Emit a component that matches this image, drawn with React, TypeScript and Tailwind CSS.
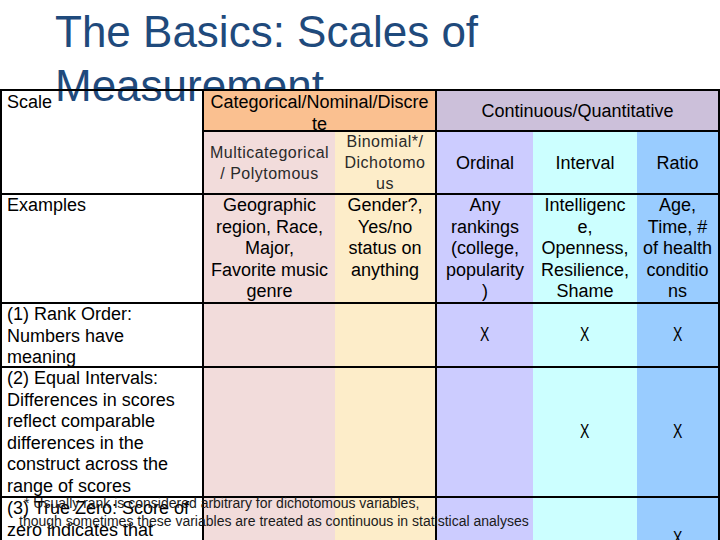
import React from "react";

const X = () => <span className="inline-block scale-x-[0.7] text-[20px]">X</span>;

export default function App() {
  const scaleCell = "border-l-2 border-r-2 border-b-2 border-black pl-[5px] whitespace-nowrap";
  const multi = "bg-[#f2dcdb] border-b-2 border-black";
  const bino = "bg-[#fdedc9] border-b-2 border-r-2 border-black";
  const ord = "bg-[#ccccff] border-b-2 border-black";
  const intv = "bg-[#ccffff] border-b-2 border-black";
  const ratio = "bg-[#99ccff] border-b-2 border-r-2 border-black";
  const center = "flex items-center justify-center text-center";
  const top = "text-center whitespace-nowrap";
  return (
    <div className="relative w-[720px] h-[540px] overflow-hidden bg-white font-['Liberation_Sans',Arial,sans-serif] text-black">
      <div className="h-[89px] pl-[55px] pt-[5px] text-[44px] leading-[54px] text-[#1f4a7c] whitespace-nowrap">
        <div>The Basics: Scales of</div>
        <div>Measurement</div>
      </div>
      <div className="relative z-10 grid grid-cols-[204px_131px_102px_96px_104px_83px] grid-rows-[41px_63px_109px_64px_130px_84px] border-t-2 border-black text-[18px] leading-[21.5px]">
        {/* header row 1 */}
        <div className={`${scaleCell} row-span-2 pt-px`}>Scale</div>
        <div className="col-span-2 bg-[#fac090] border-b-2 border-r-2 border-black text-center whitespace-nowrap pt-px">
          Categorical/Nominal/Discre
          <br />
          te
        </div>
        <div className={`col-span-3 bg-[#ccc0da] border-b-2 border-r-2 border-black ${center} pt-[2px]`}>
          Continuous/Quantitative
        </div>
        {/* header row 2 */}
        <div className={`${multi} ${center} text-[16px] leading-[21px] tracking-[0.5px] text-[#2a2a2a] whitespace-nowrap`}>
          <div>
            Multicategorical
            <br />/ Polytomous
          </div>
        </div>
        <div className={`${bino} ${center} text-[16px] leading-[21px] tracking-[0.5px] text-[#2a2a2a] whitespace-nowrap`}>
          <div>
            Binomial*/
            <br />
            Dichotomo
            <br />
            us
          </div>
        </div>
        <div className={`${ord} ${center} pt-[2px]`}>Ordinal</div>
        <div className={`${intv} ${center} pt-[2px]`}>Interval</div>
        <div className={`${ratio} ${center} pt-[2px]`}>Ratio</div>
        {/* examples */}
        <div className={scaleCell}>Examples</div>
        <div className={`${multi} ${top}`}>
          Geographic
          <br />
          region, Race,
          <br />
          Major,
          <br />
          Favorite music
          <br />
          genre
        </div>
        <div className={`${bino} ${top}`}>
          Gender?,
          <br />
          Yes/no
          <br />
          status on
          <br />
          anything
        </div>
        <div className={`${ord} ${top}`}>
          Any
          <br />
          rankings
          <br />
          (college,
          <br />
          popularity
          <br />)
        </div>
        <div className={`${intv} ${top}`}>
          Intelligenc
          <br />
          e,
          <br />
          Openness,
          <br />
          Resilience,
          <br />
          Shame
        </div>
        <div className={`${ratio} ${top}`}>
          Age,
          <br />
          Time, #
          <br />
          of health
          <br />
          conditio
          <br />
          ns
        </div>
        {/* rank order */}
        <div className={scaleCell}>
          (1) Rank Order:
          <br />
          Numbers have
          <br />
          meaning
        </div>
        <div className={multi}></div>
        <div className={bino}></div>
        <div className={`${ord} ${center}`}>
          <X />
        </div>
        <div className={`${intv} ${center}`}>
          <X />
        </div>
        <div className={`${ratio} ${center}`}>
          <X />
        </div>
        {/* equal intervals */}
        <div className={scaleCell}>
          (2) Equal Intervals:
          <br />
          Differences in scores
          <br />
          reflect comparable
          <br />
          differences in the
          <br />
          construct across the
          <br />
          range of scores
        </div>
        <div className={multi}></div>
        <div className={bino}></div>
        <div className={ord}></div>
        <div className={`${intv} ${center}`}>
          <X />
        </div>
        <div className={`${ratio} ${center}`}>
          <X />
        </div>
        {/* true zero */}
        <div className={scaleCell}>
          (3) True Zero: Score of
          <br />
          zero indicates that
        </div>
        <div className={multi}></div>
        <div className={bino}></div>
        <div className={ord}></div>
        <div className={intv}></div>
        <div className={`${ratio} ${center}`}>
          <X />
        </div>
      </div>
      <div className="absolute left-0 top-[494px] z-20 text-[14px] leading-[18px] text-[#1a1a1a] whitespace-nowrap">
        <div className="pl-[24px]">* Usually rank is considered arbitrary for dichotomous variables,</div>
        <div className="pl-[19px]">though sometimes these variables are treated as continuous in statistical analyses</div>
      </div>
    </div>
  );
}
